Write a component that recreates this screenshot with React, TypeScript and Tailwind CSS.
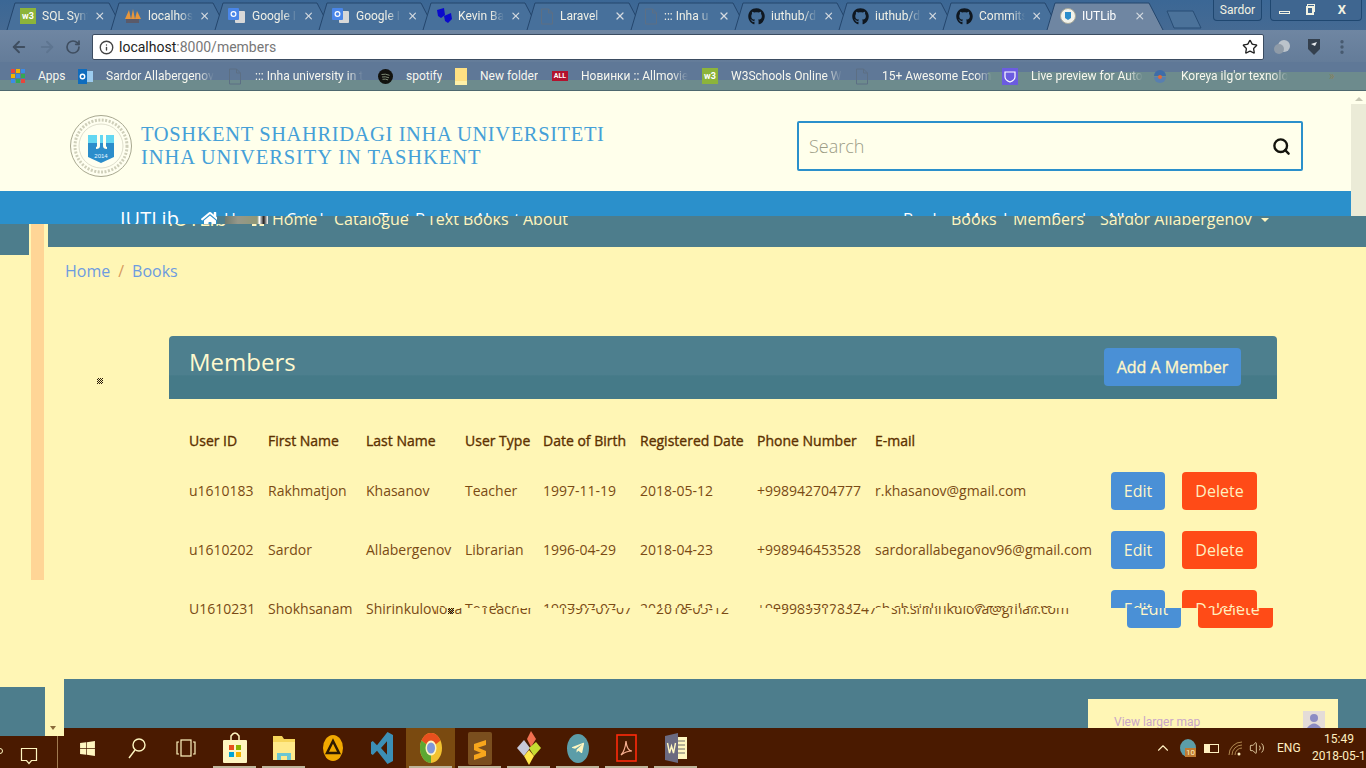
import { ArrowLeft, ArrowRight, ChevronUp, Info, MoreVertical, RotateCw, Search, Star, Volume2, X } from "lucide-react";
import { FaGithub, FaHome, FaTelegramPlane, FaWindows } from "react-icons/fa";

const tabs = [
  { title: "SQL Synt", icon: "w3" },
  { title: "localhos", icon: "pma" },
  { title: "Google I", icon: "translate" },
  { title: "Google I", icon: "translate" },
  { title: "Kevin Ba", icon: "masks" },
  { title: "Laravel", icon: "doc" },
  { title: "::: Inha u", icon: "doc" },
  { title: "iuthub/d", icon: "github" },
  { title: "iuthub/d", icon: "github" },
  { title: "Commits", icon: "github" },
  { title: "IUTLib", icon: "seal", active: true },
];

const bookmarks = [
  { title: "Apps", icon: "apps", w: "w-[67px]" },
  { title: "Sardor Allabergenov", icon: "outlook", w: "w-[150px]", fade: true },
  { title: "::: Inha university in t", icon: "doc", w: "w-[150px]", fade: true },
  { title: "spotify", icon: "spotify", w: "w-[77px]" },
  { title: "New folder", icon: "folder", w: "w-[97px]" },
  { title: "Новинки :: Allmovie", icon: "all", w: "w-[150px]", fade: true },
  { title: "W3Schools Online W", icon: "w3", w: "w-[153px]", fade: true },
  { title: "15+ Awesome Ecom", icon: "doc", w: "w-[147px]", fade: true },
  { title: "Live preview for Auto", icon: "shield", w: "w-[150px]", fade: true },
  { title: "Koreya ilg'or texnolo", icon: "korea", w: "w-[170px]", fade: true },
];

const members = [
  ["u1610183", "Rakhmatjon", "Khasanov", "Teacher", "1997-11-19", "2018-05-12", "+998942704777", "r.khasanov@gmail.com"],
  ["u1610202", "Sardor", "Allabergenov", "Librarian", "1996-04-29", "2018-04-23", "+998946453528", "sardorallabeganov96@gmail.com"],
];
const lastMember = ["U1610231", "Shokhsanam", "Shirinkulova", "Teacher", "1997-07-07", "2018-05-12", "+998991783247", "sh.shirinkulova@gmail.com"];
const heads = ["User ID", "First Name", "Last Name", "User Type", "Date of Birth", "Registered Date", "Phone Number", "E-mail"];

const rowGrid = "grid grid-cols-[79px_98px_99px_78px_97px_117px_118px_236px_71px_75px] items-center";

const Favicon = ({ kind }: { kind: string }) => {
  if (kind === "w3")
    return <span className="flex h-[16px] w-[16px] shrink-0 items-center justify-center bg-[#8CB43A] text-[9px] font-bold leading-none text-white">w3</span>;
  if (kind === "pma")
    return (
      <svg width="18" height="16" viewBox="0 0 18 16" className="shrink-0">
        <path d="M1 11 5 2l2 9zM7 11l2-10 2 10zM11 11l2-8 4 8z" fill="#E8963A" />
        <rect x="2" y="11" width="13" height="4" fill="#5A5A6A" />
      </svg>
    );
  if (kind === "translate")
    return (
      <svg width="18" height="16" viewBox="0 0 18 16" className="shrink-0">
        <rect x="7" y="3" width="10" height="12" rx="1" fill="#D8D8D8" />
        <rect x="0" y="0" width="11" height="12" rx="1" fill="#4A86E8" />
        <circle cx="5.5" cy="6" r="2.4" fill="none" stroke="#fff" strokeWidth="1.2" />
      </svg>
    );
  if (kind === "masks")
    return (
      <svg width="16" height="16" viewBox="0 0 16 16" className="shrink-0">
        <path d="M1 2 8 0l1 7-4 3-3-2zM8 8l7-3 1 6-4 4-3-2z" fill="#0A0ACC" />
      </svg>
    );
  if (kind === "doc")
    return (
      <svg width="14" height="17" viewBox="0 0 14 17" className="shrink-0" fill="none" stroke="#5C6F84" strokeWidth="1">
        <path d="M1.5 1h7l4 4v11h-11zM8.5 1v4h4" />
      </svg>
    );
  if (kind === "github") return <FaGithub className="h-[17px] w-[17px] shrink-0 text-[#0F1720]" />;
  if (kind === "seal")
    return (
      <svg width="16" height="16" viewBox="0 0 16 16" className="shrink-0">
        <circle cx="8" cy="8" r="7.5" fill="#F2F2EA" stroke="#A9A99A" />
        <path d="M5 4h6v6l-3 2-3-2z" fill="#2B8DCB" />
      </svg>
    );
  if (kind === "apps")
    return (
      <svg width="14" height="14" viewBox="0 0 14 14" className="shrink-0">
        {[0, 5, 10].map((y, r) =>
          [0, 5, 10].map((x, c) => (
            <rect key={`${r}${c}`} x={x} y={y} width="4" height="4" fill={["#E8453C", "#F4B400", "#3C8CE7", "#34A853"][(r + c) % 4]} />
          )),
        )}
      </svg>
    );
  if (kind === "outlook")
    return (
      <svg width="15" height="15" viewBox="0 0 15 15" className="shrink-0">
        <rect x="5" y="2" width="10" height="11" fill="#9CCBEF" />
        <rect x="0" y="0" width="9" height="15" fill="#0F6CBD" />
        <circle cx="4.5" cy="7.5" r="2.2" fill="none" stroke="#fff" strokeWidth="1.4" />
      </svg>
    );
  if (kind === "spotify")
    return (
      <svg width="15" height="15" viewBox="0 0 15 15" className="shrink-0" fill="none">
        <circle cx="7.5" cy="7.5" r="7.5" fill="#12120F" />
        <path d="M3.5 5.5q4-1 8 .8M4 8q3.5-.8 7 .8M4.5 10.3q3-.6 5.6.6" stroke="#7E8A74" />
      </svg>
    );
  if (kind === "folder")
    return (
      <svg width="12" height="17" viewBox="0 0 12 17" className="shrink-0">
        <rect width="12" height="17" fill="#FFE083" />
        <rect y="13" width="12" height="4" fill="#FFF1A8" />
      </svg>
    );
  if (kind === "all")
    return <span className="flex h-[10px] w-[16px] shrink-0 items-center justify-center bg-[#B3122E] text-[7px] font-bold leading-none text-white">ALL</span>;
  if (kind === "shield")
    return (
      <svg width="16" height="17" viewBox="0 0 16 17" className="shrink-0">
        <rect width="16" height="17" fill="#6B5CE0" />
        <path d="M3 4h10v5q0 3-5 5-5-2-5-5z" fill="none" stroke="#fff" strokeWidth="1.2" />
      </svg>
    );
  return (
    <svg width="16" height="17" viewBox="0 0 16 17" className="shrink-0">
      <path d="M2 8a6 6 0 0 1 12 0z" fill="#3E6CA8" />
      <path d="M2 9h12a6 6 0 0 1-12 0z" fill="#587FB0" />
      <circle cx="8" cy="9" r="2" fill="#E06A3A" />
    </svg>
  );
};

const ChromeBar = () => (
  <div className="relative h-[91px] shrink-0 overflow-hidden font-['Roboto',sans-serif] text-[12px]">
    <div className="flex h-[30px] items-end bg-[linear-gradient(#3B6795,#456A93)] pl-[13px]">
      {tabs.map((tab, i) => (
        <div key={i} className="relative flex h-[28px] w-[104px] shrink-0 items-center pl-[7px] pr-[11px]">
          <svg className="absolute -left-[7px] top-0 h-[28px] w-[120px]" viewBox="0 0 120 28">
            <path d="M1 28 9 1h94l14 27" fill={tab.active ? "#6F86A2" : "#47709B"} stroke="#24466C" strokeWidth="1" />
          </svg>
          <div className="relative flex w-full items-center gap-[6px]">
            <Favicon kind={tab.icon} />
            <span className={`w-[48px] overflow-hidden whitespace-nowrap [mask-image:linear-gradient(90deg,#000_70%,transparent)] ${tab.active ? "text-white" : "text-[#F0F0E6]"}`}>
              {tab.title}
            </span>
            <X className="ml-auto h-[12px] w-[12px] text-[#D4DAE0]" strokeWidth={2.5} />
          </div>
        </div>
      ))}
      <svg width="40" height="24" viewBox="0 0 40 24" className="ml-[9px] shrink-0">
        <path d="M1 5h26l8 17H8z" fill="#4B729A" stroke="#284D75" />
      </svg>
    </div>
    <div className="absolute right-[4px] top-0 flex h-[21px] items-stretch gap-[8px] text-[#F2F2E2]">
      <span className="flex w-[49px] items-center justify-center rounded-b-[4px] border border-t-0 border-[#1F4770] bg-[#3F6690] text-[12px]">Sardor</span>
      <div className="flex w-[92px] items-center rounded-b-[4px] border border-t-0 border-[#1F4770] bg-[#3F6690]">
        <span className="flex w-[26px] justify-center"><span className="mt-[4px] h-[3px] w-[11px] border border-[#F2F2E2]" /></span>
        <span className="relative flex w-[26px] justify-center">
          <span className="absolute left-[10px] top-[-2px] h-[8px] w-[8px] border border-[#F2F2E2]" />
          <span className="relative h-[9px] w-[8px] border-2 border-[#F2F2E2] bg-[#3F6690]" />
        </span>
        <span className="flex flex-1 justify-center text-[13px] font-bold">X</span>
      </div>
    </div>
    <div className="flex h-[32px] items-center bg-[linear-gradient(#6F86A2,#647C99)] pl-[10px] pt-[2px]">
      <ArrowLeft className="h-[18px] w-[18px] text-[#3F4E60]" strokeWidth={2.5} />
      <ArrowRight className="ml-[10px] h-[18px] w-[18px] text-[#5E7590]" strokeWidth={2.5} />
      <RotateCw className="ml-[9px] h-[16px] w-[16px] text-[#3F4E60]" strokeWidth={2.5} />
      <div className="ml-[11px] flex h-[26px] w-[1172px] items-center rounded-[2px] border border-[#3B4C61] bg-white pl-[6px] pr-[5px] text-[14px]">
        <Info className="h-[15px] w-[15px] text-[#444]" strokeWidth={2.2} />
        <span className="ml-[5px] text-[#222]">localhost</span>
        <span className="text-[#777]">:8000/members</span>
        <Star className="ml-auto h-[16px] w-[16px] text-[#222]" strokeWidth={2} />
      </div>
      <svg width="18" height="16" viewBox="0 0 18 16" className="ml-[9px] shrink-0">
        <circle cx="11" cy="7" r="6" fill="#BBC3CB" />
        <circle cx="6" cy="10" r="5" fill="#8F9BA8" />
      </svg>
      <svg width="14" height="18" viewBox="0 0 14 18" className="ml-[16px] shrink-0">
        <path d="M1 1h12v10l-6 6-6-6z" fill="#34404E" />
        <path d="M4 6l6-2-2 4z" fill="#E6E9EC" />
      </svg>
      <MoreVertical className="ml-[12px] h-[18px] w-[18px] text-[#46596E]" strokeWidth={2.5} />
    </div>
    <div className="flex h-[29px] items-start bg-[#5F7897] pl-[11px] pt-[5px] text-[#F7F7EE]">
      {bookmarks.map((b) => (
        <div key={b.title} className={`relative z-10 flex shrink-0 items-center gap-[13px] ${b.w}`}>
          <Favicon kind={b.icon} />
          <span className={`overflow-hidden whitespace-nowrap ${b.fade ? "[mask-image:linear-gradient(90deg,#000_85%,transparent)]" : ""}`}>{b.title}</span>
        </div>
      ))}
      <span className="relative z-10 ml-[7px] text-[#87805A]">»</span>
    </div>
    <div className="absolute bottom-0 left-0 h-[11px] w-full border-b border-[#4E686E] bg-[#6D8B8D]" />
    <div className="absolute bottom-[11px] right-0 h-[8px] w-[378px] bg-[#6D8B8D]" />
  </div>
);

const Logo = () => (
  <svg width="64" height="64" viewBox="0 0 64 64" className="shrink-0">
    <circle cx="32" cy="32" r="30.5" fill="#FFFFF0" stroke="#A8A890" strokeWidth="1" />
    <circle cx="32" cy="32" r="26" fill="none" stroke="#CFCFBA" strokeWidth="3" strokeDasharray="2 1.5" />
    <circle cx="32" cy="32" r="22" fill="#FFFFF0" stroke="#C8C8B4" strokeWidth="0.6" />
    <path d="M19 21h26v22l-13 6-13-6z" fill="#2B8DCB" />
    <path d="M19 21h26v8H19z" fill="#63D7F2" />
    <path d="M28 16h3v16q0 3-4 3v-2q1 0 1-1zM34 16h3v16q0 1 1 1v2q-4 0-4-3z" fill="#FFFFF0" />
    <text x="32" y="44" textAnchor="middle" fontSize="6" fontFamily="Liberation Sans, sans-serif" fill="#E8F6FF">2014</text>
  </svg>
);

const NavRow = ({ className }: { className: string }) => (
  <div className={`absolute left-[120px] top-0 flex h-[56px] w-[1101px] items-center pb-[0px] font-['Open_Sans',sans-serif] text-[16px] ${className}`}>
    <div className="flex h-[56px] w-full items-start pt-[16px] leading-[24px]">
      <span className="w-[81px] text-[20px]">IUTLib</span>
      <span className="flex w-[85px] items-center gap-[5px]"><FaHome className="h-[18px] w-[18px]" />Home</span>
      <span className="w-[93px]">Catalogue</span>
      <span className="w-[96px]">Text Books</span>
      <span>About</span>
      <span className="ml-auto w-[62px]">Books</span>
      <span className="w-[87px]">Members</span>
      <span className="flex w-[169px] items-center">Sardor Allabergenov<span className="ml-[9px] mt-[1px] h-0 w-0 border-x-[4px] border-t-[4px] border-x-transparent border-t-current" /></span>
    </div>
  </div>
);

const Header = () => (
  <>
    <div className="flex h-[100px] shrink-0 items-center bg-[#FFFFEB] pl-[69px] pr-[63px] pt-[10px]">
      <Logo />
      <div className="ml-[8px] font-['Liberation_Serif',serif] text-[20.5px] leading-[23px] text-[#45A0D8]">
        <div className="tracking-[0.62px]">TOSHKENT SHAHRIDAGI INHA UNIVERSITETI</div>
        <div className="tracking-[0.92px]">INHA UNIVERSITY IN TASHKENT</div>
      </div>
      <div className="ml-auto flex h-[50px] w-[506px] items-center rounded-[2px] border-2 border-[#2B90CB] pl-[10px] pr-[10px] font-['Open_Sans',sans-serif] text-[18px] font-light text-[#9C9C86]">
        Search
        <Search className="ml-auto h-[19px] w-[19px] text-[#14140C]" strokeWidth={3} />
      </div>
    </div>
    <div className="h-[25px] shrink-0 bg-[#2B90CB]" />
    <div className="h-[31px] shrink-0 bg-[#4D7D8C]" />
  </>
);

const NavOverlay = () => (
  <div className="absolute left-0 top-[191px] h-[56px] w-full overflow-hidden">
    <div className="absolute left-0 top-[25px] h-[8px] w-[217px] bg-[#2B90CB]" />
    <div className="absolute left-[29px] top-[33px] h-[23px] w-[19px] bg-[#FFF6B5]" />
    <NavRow className="text-white [clip-path:polygon(-120px_0,100%_0,100%_25px,97px_25px,97px_33px,-120px_33px)]" />
    <div className="absolute left-[48px] top-0 h-[56px] w-[1301px]">
      <NavRow className="left-[120px] text-[#FFF6C0] [clip-path:polygon(-120px_33px,97px_33px,97px_25px,1300px_25px,1300px_56px,-120px_56px)]" />
    </div>
    <div className="absolute left-[225px] top-[25px] h-[8px] w-[43px] bg-[linear-gradient(90deg,#6D7A70,#96988A_30%,#8F9878_75%,#FFF_80%,#222_90%,#FFF)]" />
  </div>
);

const Cells = ({ row }: { row: string[] }) => (
  <>
    {row.map((cell) => (
      <span key={cell} className="whitespace-nowrap pb-[2px]">{cell}</span>
    ))}
    <button className="flex h-[38px] w-[54px] items-center justify-center rounded-[4px] bg-[#4A90D6] text-[16px] text-[#FFF6C8]">Edit</button>
    <button className="flex h-[38px] w-[75px] items-center justify-center rounded-[4px] bg-[#FF4B17] text-[16px] text-[#FFF0C0]">Delete</button>
  </>
);

const MembersCard = () => (
  <div className="ml-[169px] mt-[53px] w-[1108px] font-['Open_Sans',sans-serif] text-[14px]">
    <div className="flex h-[63px] items-start justify-between rounded-t-[4px] bg-[linear-gradient(#4D7F8E_0%,#4D7F8E_62%,#457A88_63%,#457A88_100%)] pl-[20px] pr-[36px]">
      <h2 className="pt-[8px] text-[24px] leading-[36px] text-[#FFF9CF]">Members</h2>
      <button className="mt-[12px] h-[38px] w-[137px] rounded-[4px] bg-[#4A90D6] text-[16px] font-medium text-[#FFF6C8] [-webkit-text-stroke:0.3px_#FFF6C8]">Add A Member</button>
    </div>
    <div className="px-[20px] pt-[21px] text-[#7A4A14]">
      <div className={`${rowGrid} h-[42px] font-medium text-[#5C3000] [-webkit-text-stroke:0.35px_#5C3000]`}>
        {heads.map((head) => (
          <span key={head} className="whitespace-nowrap pb-[2px]">{head}</span>
        ))}
      </div>
      {members.map((row) => (
        <div key={row[0]} className={`${rowGrid} h-[59px] pb-px`}>
          <Cells row={row} />
        </div>
      ))}
      <div className="relative">
        <div className={`${rowGrid} h-[59px] pb-px [clip-path:polygon(0_0,100%_0,100%_28px,247px_28px,247px_100%,0_100%)]`}>
          <Cells row={lastMember} />
        </div>
        <div className={`${rowGrid} absolute left-[16px] top-0 h-[59px] w-full pb-px [clip-path:polygon(231px_28px,100%_28px,100%_100%,231px_100%)]`}>
          <Cells row={lastMember} />
        </div>
      </div>
    </div>
  </div>
);

const Speck = ({ className }: { className: string }) => (
  <svg width="6" height="6" viewBox="0 0 6 6" className={`absolute ${className}`}>
    {[0, 1, 2, 3, 4, 5].map((y) =>
      [0, 1, 2, 3, 4, 5].map((x) => ((x + y) % 2 ? <rect key={`${x}${y}`} x={x} y={y} width="1" height="1" fill="#2A1A08" /> : null)),
    )}
  </svg>
);

const Footer = () => (
  <div className="flex h-[49px] shrink-0 justify-end overflow-hidden bg-[#4D7D8C] pr-[28px] pt-[20px]">
    <div className="relative h-[29px] w-[250px] bg-[#FFF6B5] pl-[26px] pt-[14px] font-['Roboto',sans-serif] text-[12px] leading-[18px] text-[#C9A6C8]">
      View larger map
      <svg width="22" height="17" viewBox="0 0 22 17" className="absolute left-[215px] top-[12px]">
        <rect width="22" height="17" fill="#E4DCD8" />
        <circle cx="11" cy="7" r="4" fill="#8C8CC4" />
        <path d="M4 17q7-9 14 0z" fill="#8C8CC4" />
      </svg>
    </div>
  </div>
);

const taskIcons: { key: string; el: React.ReactNode; run?: boolean; active?: boolean }[] = [
  { key: "windows", el: <FaWindows className="h-[17px] w-[17px] text-[#FFF6C0]" /> },
  {
    key: "search",
    el: (
      <svg width="18" height="22" viewBox="0 0 18 22" fill="none" stroke="#FFF6C0" strokeWidth="1.4">
        <circle cx="11" cy="8" r="6" />
        <path d="M7 13 1 21" />
      </svg>
    ),
  },
  {
    key: "taskview",
    el: (
      <svg width="20" height="18" viewBox="0 0 20 18" fill="none" stroke="#FFF6C0" strokeWidth="1.2">
        <rect x="5" y="1" width="10" height="16" />
        <path d="M3 3H1v12h2M17 3h2v12h-2" />
      </svg>
    ),
  },
  {
    key: "store",
    run: true,
    el: (
      <svg width="24" height="32" viewBox="0 0 24 32">
        <path d="M8 9V4q4-6 8 0v5" fill="none" stroke="#FFF6C0" strokeWidth="1.5" />
        <rect y="8" width="24" height="23" rx="1" fill="#FFF6C0" />
        <rect x="6" y="13" width="5" height="5" fill="#E8501E" />
        <rect x="13" y="13" width="5" height="5" fill="#8CB400" />
        <rect x="6" y="20" width="5" height="5" fill="#00A4D8" />
        <rect x="13" y="20" width="5" height="5" fill="#F4B400" />
      </svg>
    ),
  },
  {
    key: "explorer",
    run: true,
    el: (
      <svg width="22" height="24" viewBox="0 0 22 24">
        <path d="M0 0h9l2 3h11v21H0z" fill="#F6D55A" />
        <rect y="6" width="22" height="18" fill="#FFE98A" />
        <path d="M4 24v-7h14v7h-4v-4H8v4z" fill="#6CC6D2" />
      </svg>
    ),
  },
  {
    key: "triangle",
    el: (
      <svg width="20" height="26" viewBox="0 0 20 26">
        <ellipse cx="10" cy="13" rx="10" ry="13" fill="#F2A900" />
        <path d="M10 6 16 18H4z" fill="none" stroke="#2E1A00" strokeWidth="2.5" />
      </svg>
    ),
  },
  {
    key: "vscode",
    el: (
      <svg width="24" height="32" viewBox="0 0 24 24" preserveAspectRatio="none">
        <path d="M17.5 0 7 10 2.8 6.8 1 7.7v8.6l1.8.9L7 14l10.5 10L23 21.7V2.3zM17 7v10l-6-5z" fill="#3C8FB5" />
      </svg>
    ),
  },
  {
    key: "chrome",
    active: true,
    run: true,
    el: (
      <svg width="22" height="30" viewBox="0 0 24 24" preserveAspectRatio="none">
        <circle cx="12" cy="12" r="12" fill="#F2C230" />
        <path d="M12 12 1.6 6A12 12 0 0 1 22.4 6z" fill="#E8501E" />
        <path d="M12 12 1.6 6A12 12 0 0 0 12 24z" fill="#5DA832" />
        <circle cx="12" cy="12" r="6" fill="#FFF6C0" />
        <circle cx="12" cy="12" r="4.4" fill="#7F98D8" />
      </svg>
    ),
  },
  {
    key: "sublime",
    run: true,
    el: (
      <svg width="24" height="33" viewBox="0 0 24 33">
        <rect width="24" height="33" rx="2" fill="#7A4E1E" />
        <path d="M6 12 18 8v5L6 17zM6 14l12 5v4L6 18zM18 19v5L6 28v-5z" fill="#F8A61C" />
      </svg>
    ),
  },
  {
    key: "kraken",
    run: true,
    el: (
      <svg width="24" height="34" viewBox="0 0 24 34">
        <path d="M10 8 14 0l5 8-5 8z" fill="#F07050" />
        <path d="M0 17 7 9l6 8-6 8z" fill="#C6C8D8" />
        <path d="M12 17l7-6 5 6-7 8z" fill="#C6DC32" />
        <path d="M7 25l5-6 5 6-5 9z" fill="#FFE64A" />
      </svg>
    ),
  },
  {
    key: "telegram",
    run: true,
    el: (
      <span className="flex h-[29px] w-[22px] items-center justify-center rounded-[50%] bg-[#5C9DA8]">
        <FaTelegramPlane className="h-[14px] w-[14px] text-[#FFF6C0]" />
      </span>
    ),
  },
  {
    key: "acrobat",
    run: true,
    el: (
      <svg width="21" height="28" viewBox="0 0 21 28" fill="none">
        <rect x="1" y="1" width="19" height="26" stroke="#FF2A0A" strokeWidth="1.6" />
        <path d="M5 21q4-4 5-14 1 10 6 10-6 0-11 4z" stroke="#F8B090" strokeWidth="1.2" />
      </svg>
    ),
  },
  {
    key: "word",
    run: true,
    el: (
      <svg width="22" height="30" viewBox="0 0 22 30">
        <rect x="10" y="4" width="12" height="22" fill="#FFF6C0" />
        <path d="M13 8h7M13 12h7M13 16h7M13 20h7" stroke="#6A6A6A" />
        <path d="M0 3 13 0v30L0 27z" fill="#6B6A80" />
        <path d="M2.5 10 4.5 20 6.5 13 8.5 20 10.500 10" fill="none" stroke="#FFF6C0" strokeWidth="1.4" />
      </svg>
    ),
  },
];

const Taskbar = () => (
  <div className="flex h-[40px] shrink-0 items-stretch bg-[#4A1A00] pl-[63px] text-[#FFF0C0]">
    {taskIcons.map((item) => (
      <div key={item.key} className={`relative flex w-[49px] items-center justify-center ${item.active ? "bg-[#7A4A10]" : ""}`}>
        {item.el}
        {item.run && <span className="absolute bottom-0 left-[3px] right-[3px] h-[2px] bg-[#BDB59A]" />}
      </div>
    ))}
    <div className="ml-auto flex items-center font-['Roboto',sans-serif] text-[12px]">
      <ChevronUp className="h-[18px] w-[18px]" strokeWidth={1.5} />
      <span className="relative ml-[8px] flex h-[18px] w-[16px] items-end justify-end rounded-[50%] bg-[#5C9DA8]">
        <span className="bg-[#C07A30] px-px text-[8px] leading-[9px] text-[#FFF0C0]">10</span>
      </span>
      <span className="ml-[8px] flex h-[9px] w-[15px] items-stretch border border-[#FFF0C0] pr-[8px]"><span className="w-full bg-[#FFF0C0]" /></span>
      <svg width="16" height="15" viewBox="0 0 16 15" fill="none" stroke="#B08850" className="ml-[9px]">
        <path d="M1 14A13 13 0 0 1 14 1M4 14a10 10 0 0 1 10-10M7 14a7 7 0 0 1 7-7" />
        <circle cx="11" cy="13" r="1.5" fill="#FFF0C0" stroke="none" />
      </svg>
      <Volume2 className="ml-[5px] h-[16px] w-[16px]" strokeWidth={1.2} />
      <span className="ml-[12px] w-[35px]">ENG</span>
      <div className="w-[54px] overflow-hidden whitespace-nowrap text-center leading-[17px]">
        <div>15:49</div>
        <div className="text-left">2018-05-12</div>
      </div>
    </div>
  </div>
);

export default function App() {
  return (
    <div className="relative flex h-[768px] w-[1366px] flex-col overflow-hidden bg-[#FFF6B5]">
      <ChromeBar />
      <Header />
      <main className="h-[432px] shrink-0 bg-[#FFF6B5]">
        <nav className="flex gap-[8px] pl-[65px] pt-[12px] font-['Open_Sans',sans-serif] text-[16px] leading-[24px] text-[#6D9BE0]">
          <span>Home</span>
          <span className="text-[#D89A60]">/</span>
          <span>Books</span>
        </nav>
        <MembersCard />
      </main>
      <Footer />
      <Taskbar />

      {/* broken repaint pieces that sit over the page */}
      <NavOverlay />
      <div className="absolute left-[1351px] top-[91px] h-[125px] w-[15px] bg-[#FFFFEB]">
        <div className="mx-auto mt-[6px] h-0 w-0 border-x-[4px] border-b-[4px] border-x-transparent border-b-[#C8C8B4]" />
        <div className="mt-[3px] h-[112px] bg-[#EBEBD7]" />
      </div>
      <div className="absolute left-0 top-[247px] h-[8px] w-[29px] bg-[#4D7D8C]" />
      <div className="absolute left-[31px] top-[224px] h-[356px] w-[13px] bg-[#FFD596]" />
      <Speck className="left-[97px] top-[378px]" />
      <Speck className="left-[448px] top-[608px]" />
      <div className="absolute left-0 top-[679px] h-[57px] w-[64px] bg-[#FFF6B5]">
        <div className="mt-[8px] h-[49px] w-[45px] bg-[#4D7D8C]" />
        <div className="absolute left-[50px] top-[47px] h-0 w-0 border-x-[3.500px] border-t-[4px] border-x-transparent border-t-[#8A6A3A]" />
      </div>
      <svg width="18" height="19" viewBox="0 0 18 19" fill="none" stroke="#FFF6C0" strokeWidth="1.2" className="absolute left-[20px] top-[747px]">
        <path d="M1.500 1.500h15v12h-5l-2.500 3-2.500-3h-5z" />
      </svg>
      <div className="absolute left-[57px] top-[736px] h-[32px] w-px bg-[#A07A50]" />
      <div className="absolute left-[-4px] top-[748px] h-[6px] w-[7px] rounded-full border border-[#FFF6C0]" />
    </div>
  );
}
